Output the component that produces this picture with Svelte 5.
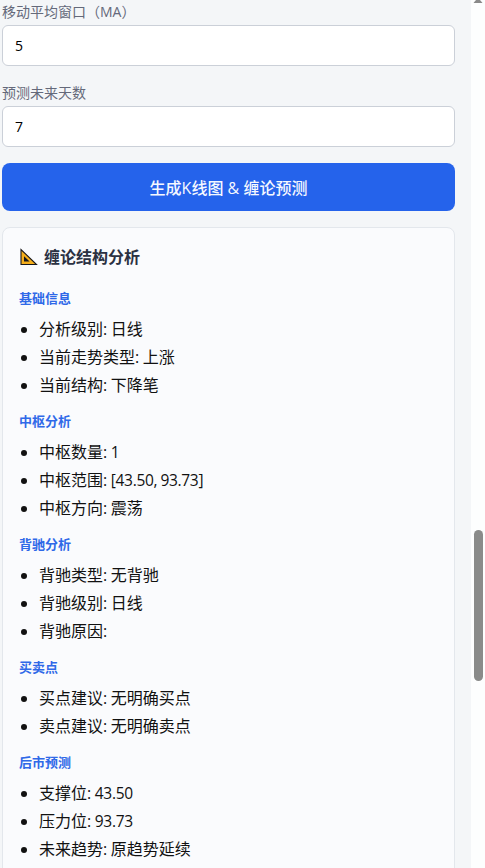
<script>
  let maWindow = "5"
  let futureDays = "7"

  const sections = [
    {
      title: "基础信息",
      items: [
        { label: "分析级别", value: "日线" },
        { label: "当前走势类型", value: "上涨" },
        { label: "当前结构", value: "下降笔" },
      ],
    },
    {
      title: "中枢分析",
      items: [
        { label: "中枢数量", value: "1", number: true },
        { label: "中枢范围", value: "[43.50, 93.73]", number: true },
        { label: "中枢方向", value: "震荡" },
      ],
    },
    {
      title: "背驰分析",
      items: [
        { label: "背驰类型", value: "无背驰" },
        { label: "背驰级别", value: "日线" },
        { label: "背驰原因", value: "" },
      ],
    },
    {
      title: "买卖点",
      items: [
        { label: "买点建议", value: "无明确买点" },
        { label: "卖点建议", value: "无明确卖点" },
      ],
    },
    {
      title: "后市预测",
      items: [
        { label: "支撑位", value: "43.50", number: true },
        { label: "压力位", value: "93.73", number: true },
        { label: "未来趋势", value: "原趋势延续" },
      ],
    },
  ]
</script>

<div class="page">
  <main>
    <label for="ma">移动平均窗口（MA）</label>
    <input id="ma" type="text" bind:value={maWindow} />
    <label for="days">预测未来天数</label>
    <input id="days" type="text" bind:value={futureDays} />
    <button>生成K线图 &amp; 缠论预测</button>

    <div class="card">
      <h3>
        <svg width="18" height="18" viewBox="0 0 18 18" aria-hidden="true">
          <path
            d="M1 1.5V16.5H16.5Z"
            fill="#f5ae1b"
            stroke="#17171c"
            stroke-width="1.1"
          />
          <path d="M4 8.2V13.5H9.6Z" fill="#17171c" />
        </svg>
        <span>缠论结构分析</span>
      </h3>
      {#each sections as section}
        <h4>{section.title}</h4>
        <ul>
          {#each section.items as item}
            <li>
              {item.label}:
              <span class:number={item.number}>{item.value}</span>
            </li>
          {/each}
        </ul>
      {/each}
    </div>
  </main>
  <div class="scrollbar">
    <svg class="arrow" width="10" height="3" viewBox="0 0 10 3">
      <path d="M3 0H7L9.5 3H0.5Z" fill="#8a8a8a" />
    </svg>
    <div class="thumb"></div>
  </div>
</div>

<style>
  :global(body) {
    overflow: hidden;
  }
  .page {
    display: flex;
    height: 868px;
    overflow: hidden;
    background: #f4f6f8;
    font-family: "Open Sans", "Noto Sans CJK SC", sans-serif;
  }
  main {
    flex: 1;
    padding: 0 16px 0 2px;
  }
  label {
    display: block;
    height: 20px;
    margin-bottom: 3px;
    padding-top: 2px;
    font-size: 14px;
    line-height: 19px;
    color: #64697a;
  }
  input {
    display: block;
    box-sizing: border-box;
    width: 100%;
    height: 41px;
    margin: 0 0 15px;
    padding: 0 12px;
    border: 1px solid #cbd0d8;
    border-radius: 6px;
    background: #fff;
    font-family: inherit;
    font-size: 14px;
    color: #000;
  }
  button {
    display: block;
    width: 100%;
    height: 48px;
    margin: 16px 0;
    padding: 0;
    border: none;
    border-radius: 8px;
    background: #2563eb;
    font-family: inherit;
    font-size: 16px;
    font-weight: 500;
    color: #f5f8ff;
  }
  .card {
    height: 700px;
    padding: 17px 16px;
    border: 1px solid #e3e7ec;
    border-radius: 8px;
    background: #fafbfd;
  }
  h3 {
    display: flex;
    align-items: center;
    gap: 6px;
    height: 24px;
    margin: 0 0 19px;
    padding-left: 1px;
    font-size: 16px;
    font-weight: 600;
    color: #2b3142;
  }
  h3 span {
    padding-bottom: 2px;
  }
  h4 {
    height: 20px;
    margin: 0 0 7px;
    font-size: 13px;
    font-weight: 600;
    line-height: 20px;
    color: #2f69e8;
  }
  ul {
    margin: 0 0 12px;
    padding-left: 20px;
  }
  li {
    height: 28px;
    font-size: 16px;
    line-height: 28px;
    word-spacing: -0.6px;
    color: #111;
  }
  .number {
    font-size: 15.5px;
    letter-spacing: -0.3px;
  }
  .scrollbar {
    display: flex;
    flex-direction: column;
    align-items: center;
    width: 13px;
    padding-left: 1px;
    box-sizing: border-box;
    margin-right: 1px;
    background: #fdfefe;
    box-shadow: 1px 0 #fdfefe;
  }
  .arrow {
    display: block;
  }
  .thumb {
    width: 9px;
    height: 151px;
    margin-top: 527px;
    border-radius: 5px;
    background: #8a8b8a;
  }
</style>
